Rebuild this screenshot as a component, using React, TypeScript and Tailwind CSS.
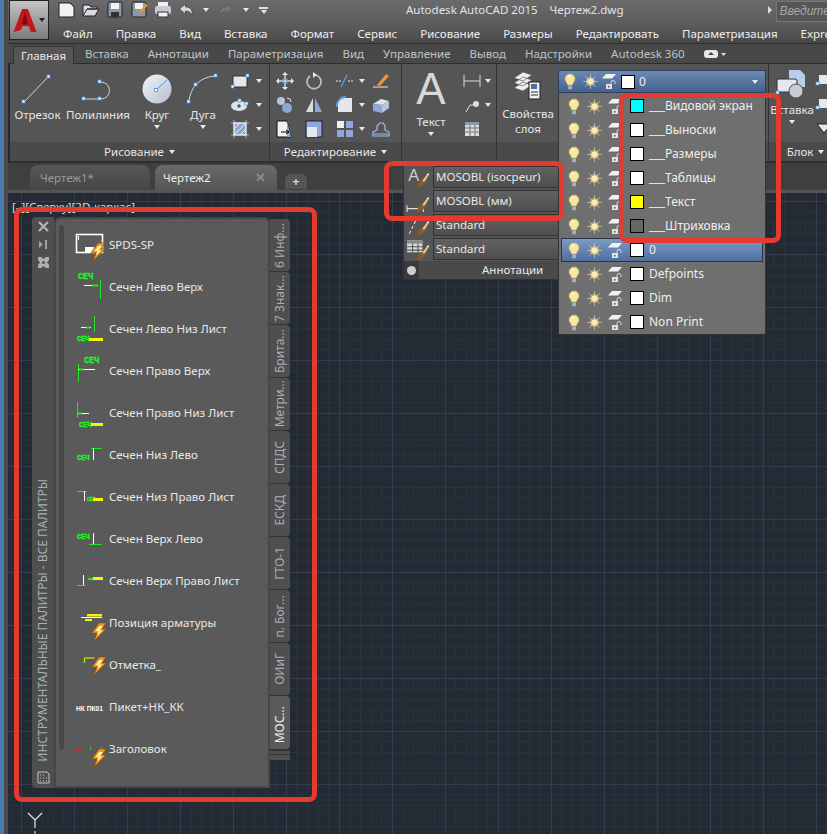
import React from 'react';

const Bolt = ({ x = 16, y = 16 }: { x?: number; y?: number }) => (
  <g transform={`translate(${x} ${y})`}>
    <path d="M8 0 L15 0 L11 6 L15 6 L3 18 L6 10 L1 10 Z" fill="#f59a1c" stroke="#9a4f0a" strokeWidth="0.8" />
    <path d="M8.500 3 L12 3 L8.500 7.500 L11.500 7.500 L6 12.500 L7.500 8 L4.500 8 Z" fill="#fff3b0" />
  </g>
);

const Seh = ({ x, y, size = 8.500 }: { x: number; y: number; size?: number }) => (
  <text x={x} y={y} fontSize={size} fontWeight="700" fill="#22f522" stroke="#22f522" strokeWidth=".3" fontFamily="'Liberation Mono', monospace">СЕЧ</text>
);

const G = '#22e822';

const paletteIcons: React.ReactNode[] = [
  <>
    <rect x="1.500" y="6.500" width="26" height="18" fill="none" stroke="#fff" strokeWidth="1.600" />
    <path d="M3.500 8v4" stroke="#fff" />
    <rect x="10" y="19" width="9" height="5" fill="#fff" />
    <Bolt x={15} y={15} />
  </>,
  <>
    <Seh x={3} y={9} />
    <path d="M9 15.500h14" stroke="#fff" /><path d="M17 15.500h6" stroke={G} strokeWidth="2" />
    <path d="M25.500 10v19" stroke={G} />
  </>,
  <>
    <path d="M19.500 4v16" stroke={G} /><path d="M6 15.500h10" stroke="#fff" /><path d="M11 15.500h4" stroke={G} strokeWidth="2" />
    <Seh x={2} y={29} size={7} />
    <rect x="14" y="26" width="14" height="3" fill="#f5f500" />
  </>,
  <>
    <Seh x={9} y={9} />
    <path d="M3.500 10v18" stroke={G} /><path d="M3 15.500h17" stroke="#fff" /><path d="M4 15.500h5" stroke={G} strokeWidth="2" />
  </>,
  <>
    <path d="M2.500 6v16" stroke={G} /><path d="M3 17.500h11" stroke="#fff" /><path d="M3 17.500h4" stroke={G} strokeWidth="2" />
    <Seh x={4} y={31} size={7} />
    <rect x="16" y="27" width="12" height="3" fill="#f5f500" />
  </>,
  <>
    <path d="M16 10.500h11" stroke={G} /><path d="M18.500 10v12" stroke="#fff" />
    <Seh x={2} y={22} size={7} />
  </>,
  <>
    <path d="M2 11.500h10" stroke={G} /><path d="M9.500 11v10" stroke="#fff" />
    <Seh x={12} y={21} size={4.500} /><rect x="18" y="18" width="10" height="3" fill="#f5f500" />
  </>,
  <>
    <Seh x={2} y={17} size={7} /><path d="M18.500 11v11" stroke="#fff" /><path d="M14 22.500h13" stroke={G} />
  </>,
  <>
    <path d="M8.500 11v10" stroke="#fff" /><path d="M2 21.500h9" stroke={G} />
    <Seh x={13} y={16} size={4} /><rect x="18" y="13" width="10" height="3" fill="#f5f500" />
  </>,
  <>
    <path d="M6 11.500h21" stroke="#fff" /><rect x="12" y="8" width="15" height="2.500" fill="#f5f500" /><rect x="10" y="13" width="7" height="2" fill="#f5f500" />
    <Bolt x={16} y={17} />
  </>,
  <>
    <path d="M9.500 14v-4h10" stroke="#f5f500" fill="none" /><rect x="8.500" y="13" width="2" height="2" fill={G} />
    <Bolt x={16} y={9} />
  </>,
  <text x="1" y="21" fontSize="7.500" fontWeight="700" fill="#fff" textLength="27" lengthAdjust="spacingAndGlyphs" fontFamily="'Liberation Sans', sans-serif">НК ПК01</text>,
  <>
    <path d="M1 18.500h5" stroke="#e02020" /><path d="M15.500 15v3" stroke={G} /><path d="M26 15v3" stroke={G} />
    <Bolt x={16} y={17} />
  </>,
];

const paletteLabels = [
  'SPDS-SP', 'Сечен Лево Верх', 'Сечен Лево Низ Лист', 'Сечен Право Верх', 'Сечен Право Низ Лист',
  'Сечен Низ Лево', 'Сечен Низ Право Лист', 'Сечен Верх Лево', 'Сечен Верх Право Лист',
  'Позиция арматуры', 'Отметка_', 'Пикет+НК_КК', 'Заголовок',
];

const paletteTabs = ['6 Инф...', '7 Знак...', 'Брита...', 'Метри...', 'СПДС', 'ЕСКД', 'ГТО-1', 'п. Бог...', 'ОИиГ'];

const Bulb = () => (
  <svg width="12" height="17" viewBox="0 0 12 17">
    <path d="M6 1a5 5 0 0 0-5 5c0 2.200 2 3 2.600 6h4.800c.6-3 2.600-3.800 2.600-6a5 5 0 0 0-5-5Z" fill="#f6e6a0" stroke="#c9b25c" strokeWidth=".6" />
    <path d="M3.500 3.500a3 3 0 0 1 2-1.200v3Z" fill="#fffbe6" />
    <path d="M4 12.500h4v3l-1 1h-2l-1-1Z" fill="#a8adb5" />
  </svg>
);

const Sun = () => (
  <svg width="15" height="15" viewBox="0 0 15 15">
    <path d="M7.500 0v15M0 7.500h15M2.200 2.200l10.600 10.600M12.800 2.200L2.200 12.800" stroke="#cfc8a8" strokeWidth=".7" />
    <circle cx="7.500" cy="7.500" r="4.600" fill="#efe3ae" fillOpacity=".5" />
    <circle cx="7.500" cy="7.500" r="3" fill="#fbeeb0" />
  </svg>
);

const LockIcon = () => (
  <svg width="17" height="17" viewBox="0 0 17 17">
    <path d="M5 1h10l-4 4.500H1Z" fill="#f2f2f2" />
    <rect x="5" y="11" width="6" height="5" fill="#e2e2e2" />
    <path d="M10 11V9.500a2 2 0 0 1 4 0V11" fill="none" stroke="#e8e8e8" strokeWidth=".9" />
    <rect x="7" y="13" width="1.500" height="1.500" fill="#555" />
  </svg>
);

const Caret = ({ className = '' }: { className?: string }) => (
  <span className={`inline-block w-0 h-0 border-x-[3.500px] border-x-transparent border-t-[4px] border-t-[#e8e8e8] ${className}`} />
);

const Grip = ({ x, y }: { x: number; y: number }) => (
  <rect x={x} y={y} width="3" height="3" fill="#fff" stroke="#4a90e2" strokeWidth=".8" />
);

const LineTool = () => (
  <svg width="34" height="34" viewBox="0 0 34 34">
    <path d="M3 30L27 5" stroke="#d6d6d6" /><Grip x={1} y={28} /><Grip x={26} y={3} />
  </svg>
);
const PolyTool = () => (
  <svg width="34" height="34" viewBox="0 0 34 34">
    <path d="M2 27h18M20 10a8.500 8.500 0 0 1 0 17" stroke="#d6d6d6" fill="none" /><Grip x={1} y={25} /><Grip x={17} y={25} /><Grip x={17} y={8} />
  </svg>
);
const CircleTool = () => (
  <svg width="32" height="32" viewBox="0 0 32 32">
    <defs>
      <linearGradient id="cg" x1="0" y1="0" x2="1" y2="1"><stop offset="0" stopColor="#f4f6fa" /><stop offset="1" stopColor="#b4bccb" /></linearGradient>
    </defs>
    <circle cx="16" cy="16" r="14.500" fill="url(#cg)" />
    <path d="M15 17L26 7" stroke="#4a90e2" /><Grip x={13.500} y={15.500} />
  </svg>
);
const ArcTool = () => (
  <svg width="34" height="34" viewBox="0 0 34 34">
    <path d="M3 30C4 15 14 5 29 4" stroke="#d6d6d6" fill="none" /><Grip x={1} y={28} /><Grip x={8} y={11} /><Grip x={28} y={2} />
  </svg>
);

const SmallIcon = ({ children }: { children: React.ReactNode }) => (
  <svg width="18" height="18" viewBox="0 0 18 18">{children}</svg>
);

const rectIcon = <SmallIcon><rect x="2" y="4" width="14" height="11" fill="#e4e7ee" stroke="#333" /><Grip x={0} y={13} /><Grip x={15} y={2} /></SmallIcon>;
const ellipseIcon = <SmallIcon><ellipse cx="8" cy="10" rx="8" ry="5" fill="#dfe3ea" /><path d="M8 8v4M6 10h4" stroke="#333" /><Grip x={7} y={3} /><Grip x={14} y={6} /></SmallIcon>;
const hatchIcon = <SmallIcon><rect x="3" y="3" width="12" height="12" fill="#8ea6d8" stroke="#fff" /><path d="M3 9l6-6M3 15L15 3M9 15l6-6" stroke="#e8eefc" /><path d="M0 3h18M0 15h18M3 0v18M15 0v18" stroke="#eee" strokeWidth=".6" /></SmallIcon>;

const editIcons: React.ReactNode[] = [
  <SmallIcon><path d="M9 1v16M1 9h16" stroke="#cfd6e0" strokeWidth="1.500" /><path d="M9 0l3 3H6ZM9 18l3-3H6ZM0 9l3-3v6ZM18 9l-3-3v6Z" fill="#e8e8e8" /><rect x="7" y="7" width="4" height="4" fill="none" stroke="#7ba7e0" /></SmallIcon>,
  <SmallIcon><path d="M5 4a7 7 0 1 0 6-1" fill="none" stroke="#b8bcc4" strokeWidth="1.800" /><path d="M8 0l4 3-4 3Z" fill="#e8e8e8" /></SmallIcon>,
  <SmallIcon><path d="M0 9h5M12 9h6" stroke="#e8e8e8" strokeDasharray="2 1" /><path d="M5 15l6-12" stroke="#5aa0ee" strokeWidth="1.200" /></SmallIcon>,
  <SmallIcon><path d="M1 15h15" stroke="#eee" /><path d="M5 13l9-11 3 2-9 10Z" fill="#e79a2e" /><path d="M3 15l2-3 3 2Z" fill="#c55" /></SmallIcon>,
  <SmallIcon><circle cx="5" cy="5" r="4" fill="#b8c4dc" /><circle cx="11" cy="12" r="5" fill="#8ea6d8" /><path d="M11 2a4 4 0 0 1 4 4" fill="none" stroke="#eee" /></SmallIcon>,
  <SmallIcon><path d="M8 2v14L1 16Z" fill="#d8dce4" /><path d="M10 2v14h7Z" fill="#8ea6d8" /></SmallIcon>,
  <SmallIcon><path d="M2 16V8a6 6 0 0 1 6-6h8v14Z" fill="#e4e7ee" /><path d="M1 11a9 9 0 0 1 9-10" fill="none" stroke="#5aa0ee" strokeWidth="1.800" /></SmallIcon>,
  <SmallIcon><path d="M1 8l8-5 8 2-7 4Z" fill="#dfe3ea" /><path d="M1 8v7l9 2V9Z" fill="#8ea6d8" /><path d="M10 9v8l7-5V5Z" fill="#b8c4dc" /></SmallIcon>,
  <SmallIcon><path d="M1 1h10l4 16H1Z" fill="#eef0f5" stroke="#111" /><path d="M11 1l4 16h-4Z" fill="#8ea6d8" /><path d="M5 12h8M10 10l3 2-3 2" stroke="#000" fill="none" /></SmallIcon>,
  <SmallIcon><rect x="1" y="1" width="16" height="16" fill="#8ea6d8" stroke="#223" /><rect x="2" y="7" width="10" height="10" fill="#e4e7ee" /></SmallIcon>,
  <SmallIcon><rect x="1" y="1" width="7" height="7" fill="#f0f0f0" /><rect x="10" y="1" width="7" height="7" fill="#8ea6d8" /><rect x="1" y="10" width="7" height="7" fill="#8ea6d8" /><rect x="10" y="10" width="7" height="7" fill="#8ea6d8" /></SmallIcon>,
  <SmallIcon><path d="M1 16v-4l4-2V6l3-3h3l2 3v4l4 2v4Z" fill="none" stroke="#9cc0f0" strokeWidth="1.200" /><path d="M2 14h14" stroke="#9cc0f0" /></SmallIcon>,
];

const Panel = ({ title, width, children }: { title: string; width: string; children?: React.ReactNode }) => (
  <div className={`${width} shrink-0 flex flex-col border-r border-[#333]`}>
    <div className="h-[80px] overflow-hidden">{children}</div>
    <div className="h-[19px] bg-[#4a4a4a] flex items-center justify-center gap-[5px] text-[#e6e6e6]">
      {title}{title !== '' && <Caret />}
    </div>
  </div>
);

const BigTool = ({ w, icon, label, caret }: { w: string; icon: React.ReactNode; label: string; caret?: boolean }) => (
  <div className={`${w} flex flex-col items-center pt-[7px] leading-[16px] text-[#e6e6e6]`}>
    <div className="h-[36px] flex items-center">{icon}</div>
    <span className="whitespace-nowrap">{label}</span>
    {caret && <Caret className="mt-[2px]" />}
  </div>
);

const layerRows = [
  { name: '___Видовой экран', color: 'bg-[#00ffff]' },
  { name: '___Выноски', color: 'bg-white' },
  { name: '___Размеры', color: 'bg-white' },
  { name: '___Таблицы', color: 'bg-white' },
  { name: '___Текст', color: 'bg-[#ffff00]' },
  { name: '___Штриховка', color: 'bg-[#666666]' },
  { name: '0', color: 'bg-white', active: true },
  { name: 'Defpoints', color: 'bg-white' },
  { name: 'Dim', color: 'bg-white' },
  { name: 'Non Print', color: 'bg-white' },
];

const brush = (
  <>
    <path d="M10 19l2-5 3-1 2 2-1 3-5 2Z" fill="#8a5a2e" />
    <path d="M15 13l4-5 1.500 1-4 6Z" fill="#e8c070" />
    <path d="M19 8l1.500-2 .5 2-1 1Z" fill="#fff" />
  </>
);
const annotationRows: { label: string; icon: React.ReactNode }[] = [
  { label: 'MOSOBL (isocpeur)', icon: <><text x="2" y="14" fontSize="15" fill="#cfcfcf" fontFamily="'Liberation Sans', sans-serif">A</text>{brush}</> },
  { label: 'MOSOBL (мм)', icon: <><path d="M1 17h15M1 14v6M16 14v6" stroke="#ddd" />{brush}</> },
  { label: 'Standard', icon: <><path d="M3 18L9 6" stroke="#ddd" strokeDasharray="3 2" />{brush}</> },
  { label: 'Standard', icon: <><rect x="1" y="2" width="14" height="11" fill="#d8dce4" /><rect x="1" y="2" width="14" height="3" fill="#888" /><path d="M1 8h14M1 11h14M6 5v8M11 5v8" stroke="#555" />{brush}</> },
];

const menu = ['Файл', 'Правка', 'Вид', 'Вставка', 'Формат', 'Сервис', 'Рисование', 'Размеры', 'Редактировать', 'Параметризация', 'Express'];
const ribbonTabs = ['Вставка', 'Аннотации', 'Параметризация', 'Вид', 'Управление', 'Вывод', 'Надстройки', 'Autodesk 360'];

const qat: React.ReactNode[] = [
  <path d="M1 2h11l4 4v10H1Z" fill="#f2f2f2" stroke="#222" />,
  <path d="M1 15V4h6l2 2h6v2H5L1 15h12l4-7H5" fill="#d8dce2" stroke="#222" />,
  <><rect x="2" y="1" width="14" height="15" rx="1" fill="#8d98a8" stroke="#222" /><rect x="5" y="2" width="8" height="6" fill="#f2f2f2" /><rect x="5" y="11" width="8" height="5" fill="#333" /></>,
  <><rect x="2" y="1" width="14" height="15" rx="1" fill="#8d98a8" stroke="#222" /><rect x="5" y="2" width="8" height="6" fill="#f2f2f2" /><path d="M9 11l7-8 2 1-7 8Z" fill="#e79a2e" /></>,
  <><rect x="4" y="1" width="10" height="5" fill="#f2f2f2" /><rect x="1" y="5" width="16" height="8" rx="2" fill="#c5cad2" /><rect x="4" y="11" width="10" height="5" fill="#f2f2f2" stroke="#333" /></>,
];

export default function App() {
  return (
    <div className="relative w-[827px] h-[834px] overflow-hidden flex bg-[#232a33] text-[11.500px] font-['Noto_Sans','Open_Sans',sans-serif]">
      <div className="w-[4px] bg-[#4a7aab]" />
      <div className="w-[4px] bg-[#4b4b4b]" />

      <div className="flex-1 flex flex-col min-w-0">
        {/* title bar */}
        <div className="h-[24px] pl-[50px] pb-[4px] flex items-center bg-[linear-gradient(#6a6a6a,#5c5c5c)] text-[#e4e4e4]">
          <div className="flex items-center gap-[6px] w-[348px] shrink-0">
            {qat.map((q, i) => (
              <svg key={i} width="18" height="18" viewBox="0 0 18 18">{q}</svg>
            ))}
            <svg width="16" height="14" viewBox="0 0 15 14"><path d="M1 6l6-5v3c4 0 7 2 7 8-2-3-4-4-7-4v3Z" fill="#d5d8dd" stroke="#333" strokeWidth=".6" /></svg>
            <Caret className="ml-[3px]" />
            <svg width="16" height="14" viewBox="0 0 15 14" className="ml-[3px]"><path d="M14 6L8 1v3C4 4 1 6 1 12c2-3 4-4 7-4v3Z" fill="#777" stroke="#555" strokeWidth=".6" /></svg>
            <Caret className="ml-[3px]" />
            <span className="ml-[4px] w-[9px] border-t-[2px] border-[#ddd] pt-[1px] flex justify-center"><Caret /></span>
          </div>
          <span className="whitespace-pre shrink-0">Autodesk AutoCAD 2015    Чертеж2.dwg</span>
          <span className="ml-[145px] mr-[4px] w-0 h-0 shrink-0 border-y-[4px] border-y-transparent border-l-[4px] border-l-[#ddd]" />
          <div className="w-[60px] h-[21px] mt-[3px] shrink-0 bg-[#565656] border border-[#777] pl-[2px] italic text-[#a8a8a8] text-[12px] leading-[19px] font-['Liberation_Sans',sans-serif]">Введите</div>
        </div>

        {/* menu */}
        <div className="h-[20px] pl-[55px] pt-[1px] flex items-center gap-[23px] bg-[linear-gradient(#5c5c5c,#484848)] border-b border-[#2d2d2d] text-[#eeeeee] whitespace-nowrap overflow-hidden">
          {menu.map(m => <span key={m}>{m}</span>)}
        </div>

        {/* ribbon tabs */}
        <div className="h-[20px] pl-[5px] flex items-end bg-[#484848] border-b border-[#2e2e2e] text-[#bfc4c8] whitespace-nowrap">
          <div className="h-[18px] w-[61px] mb-[-1px] flex items-center justify-center bg-[#555555] border border-b-0 border-[#333] text-[#e8e8e8]">Главная</div>
          <div className="flex items-center gap-[19px] h-[18px] ml-[11px]">
            {ribbonTabs.map(t => <span key={t}>{t}</span>)}
            <svg width="22" height="10" viewBox="0 0 22 10"><rect x="0" y="1" width="14" height="8" rx="3" fill="#e8e8e8" /><path d="M4 6l3-3 3 3Z" fill="#444" /><path d="M17 4h5l-2.500 3Z" fill="#ddd" /></svg>
          </div>
        </div>

        {/* ribbon panels */}
        <div className="h-[99px] ml-[2px] flex bg-[#555555] border-b-2 border-[#2e2e2e]">
          <Panel title="Рисование" width="w-[260px]">
            <div className="flex pl-[5px]">
              <BigTool w="w-[45px]" icon={<LineTool />} label="Отрезок" />
              <BigTool w="w-[76px]" icon={<PolyTool />} label="Полилиния" />
              <BigTool w="w-[42px]" icon={<CircleTool />} label="Круг" caret />
              <BigTool w="w-[50px]" icon={<ArcTool />} label="Дуга" caret />
              <div className="flex flex-col gap-[6px] pl-[3px] pt-[8px]">
                {[rectIcon, ellipseIcon, hatchIcon].map((ic, i) => (
                  <div key={i} className="flex items-center gap-[7px]">{ic}<Caret /></div>
                ))}
              </div>
            </div>
          </Panel>
          <Panel title="Редактирование" width="w-[132px]">
            <div className="grid grid-cols-[29px_31px_36px_18px] gap-y-[6px] pl-[6px] pt-[8px]">
              {editIcons.map((ic, i) => (
                <div key={i} className="flex items-center gap-[5px]">{ic}{i % 4 === 2 && <Caret />}</div>
              ))}
            </div>
          </Panel>
          <Panel title="" width="w-[95px]">
            <div className="flex pl-[10px]">
              <div className="flex flex-col items-center text-[#e6e6e6] leading-[16px] w-[38px]">
                <span className="text-[44px] leading-[50px] font-['Liberation_Sans',sans-serif] text-[#d8d8d8]">A</span>
                <span>Текст</span>
                <Caret className="mt-[2px]" />
              </div>
              <div className="flex flex-col gap-[6px] pl-[13px] pt-[8px]">
                <div className="flex items-center gap-[4px]"><SmallIcon><path d="M1 9h16M1 3v12M17 3v12" stroke="#ddd" /></SmallIcon><Caret /></div>
                <div className="flex items-center gap-[4px]"><SmallIcon><path d="M3 16l4-7h4" stroke="#ddd" fill="none" /><circle cx="13" cy="8" r="3" fill="#ddd" /></SmallIcon><Caret /></div>
                <SmallIcon><rect x="2" y="2" width="14" height="14" fill="#dadada" /><rect x="2" y="2" width="14" height="3" fill="#8d98a8" /><path d="M2 8h14M2 12h14M7 5v11M12 5v11" stroke="#777" /></SmallIcon>
              </div>
            </div>
          </Panel>
          <Panel title="" width="w-[272px]">
            <div className="flex flex-col items-center w-[62px] pt-[6px] leading-[15px] text-[#e6e6e6] text-center">
              <svg width="32" height="32" viewBox="0 0 32 32">
                <path d="M2 8l9-6 9 3-9 6ZM2 13l9-6 9 3-9 6ZM2 18l9-6 9 3-9 6Z" fill="#eee" stroke="#444" strokeWidth=".6" />
                <rect x="17" y="12" width="11" height="17" fill="#eee" stroke="#222" /><rect x="19" y="14" width="6" height="5" fill="#4a6fa5" /><path d="M19 22h7M19 25h7" stroke="#333" />
              </svg>
              <span className="mt-[4px]">Свойства<br />слоя</span>
            </div>
          </Panel>
          <Panel title="Блок" width="w-[74px]">
            <div className="flex">
              <div className="flex flex-col items-center w-[46px] pt-[4px] leading-[16px] text-[#e6e6e6]">
                <svg width="34" height="32" viewBox="0 0 34 32">
                  <path d="M14 2h11l5 5v12H14Z" fill="#b9cdea" /><rect x="2" y="11" width="20" height="13" rx="2" fill="#e4e7ee" stroke="#333" /><circle cx="21" cy="23" r="7" fill="#c8ccd4" stroke="#555" /><Grip x={1} y={23} />
                </svg>
                <span className="mt-[2px]">Вставка</span>
                <Caret className="mt-[2px]" />
              </div>
              <div className="flex flex-col gap-[6px] pt-[8px]">
                <SmallIcon><rect x="4" y="3" width="14" height="9" fill="#e4e7ee" /><Grip x={1} y={10} /></SmallIcon>
                <SmallIcon><rect x="4" y="3" width="14" height="9" fill="#e4e7ee" /><Grip x={1} y={10} /></SmallIcon>
                <SmallIcon><path d="M2 4h14l-7 9Z" fill="#e4e7ee" stroke="#222" /></SmallIcon>
              </div>
            </div>
          </Panel>
        </div>

        {/* document tabs */}
        <div className="h-[30px] pl-[22px] flex items-end gap-[5px] bg-[#3f3f3f] border-b-[3px] border-[#555555]">
          <div className="w-[120px] h-[25px] rounded-t-lg bg-[linear-gradient(#565656,#474747)] flex items-center pl-[10px] text-[#9a9a9a]">Чертеж1*</div>
          <div className="w-[122px] h-[25px] rounded-t-lg bg-[linear-gradient(#6a6a6a,#555555)] flex items-center justify-between pl-[8px] pr-[11px] text-[#eeeeee]">
            Чертеж2
            <span className="text-[#8c8c8c] text-[13px] leading-none font-bold">✕</span>
          </div>
          <div className="ml-[3px] w-[22px] h-[15px] mb-[1px] rounded-t-md bg-[#555555] flex items-center justify-center text-[#d8d8d8] text-[12px] leading-none font-bold">+</div>
        </div>

        {/* drawing area */}
        <div className="flex-1 relative bg-[#232a33] bg-[linear-gradient(#363c50_1px,transparent_1px),linear-gradient(90deg,#363c50_1px,transparent_1px),linear-gradient(#2a323d_1px,transparent_1px),linear-gradient(90deg,#2a323d_1px,transparent_1px)] bg-[size:53px_53px,53px_53px,10.600px_10.600px,10.600px_10.600px] bg-[position:13px_8px,13px_8px,2.400px_8px,2.400px_8px] text-[#d8d8d8]">
          <span className="absolute left-[4px] top-[5px] whitespace-nowrap">[–][Сверху][2D-каркас]</span>
          <svg className="absolute left-[18px] top-[618px]" width="20" height="24" viewBox="0 0 20 24">
            <path d="M2 2l7 7 7-7M9 9v8" stroke="#e8e8e8" strokeWidth="1.200" fill="none" />
            <path d="M9 20v4" stroke="#e8e8e8" />
          </svg>
        </div>
      </div>

      {/* app button */}
      <div className="absolute left-[9px] top-0 w-[40px] h-[40px] bg-[linear-gradient(#c4c4c4,#7c7c7c)] border border-[#222] flex items-center pl-[3px]">
        <svg width="24" height="25" viewBox="0 0 24 26">
          <path d="M9 1h6l9 24h-6l-2-6H9l-1 4-8 2Z" fill="#c4161c" />
          <path d="M12 4l3 13H9Z" fill="#7a0a0e" />
        </svg>
        <Caret className="ml-[2px] !border-t-[#222]" />
      </div>

      {/* annotation panel, dropped down */}
      <div className="absolute left-[403px] top-[163px] w-[157px] h-[117px] bg-[#555555] border border-[#333] flex flex-col text-[#e8e8e8]">
        <div className="flex-1 flex flex-col pt-[1px]">
          {annotationRows.map((r, i) => (
            <div key={i} className="h-[24px] flex items-center pl-[2px]">
              <svg width="24" height="22" viewBox="0 0 22 20" className="shrink-0">{r.icon}</svg>
              <div className="ml-[3px] w-[127px] h-[22px] pl-[2px] flex items-center bg-[linear-gradient(#626262,#4e4e4e)] border border-[#333]">{r.label}</div>
            </div>
          ))}
        </div>
        <div className="h-[19px] flex items-center bg-[#4a4a4a]">
          <div className="w-[15px] h-[18px] bg-[#3a3a3a] flex items-center justify-center">
            <div className="w-[9px] h-[9px] rounded-full bg-[#cfcfcf]" />
          </div>
          <span className="ml-[63px]">Аннотации</span>
        </div>
      </div>

      {/* layer dropdown */}
      <div className="absolute left-[558px] top-[70px] w-[208px] h-[23px] pl-[5px] pr-[7px] flex items-center bg-[linear-gradient(#6d89b4,#43618f)] border border-[#2c3f5e] text-[12px] text-[#eeeeee]">
        <Bulb />
        <span className="ml-[7px] flex"><Sun /></span>
        <span className="ml-[3px] flex"><LockIcon /></span>
        <span className="ml-[3px] w-[14px] h-[14px] bg-white border border-black" />
        <span className="ml-[4px]">0</span>
        <Caret className="ml-auto" />
      </div>
      <div className="absolute left-[558px] top-[93px] w-[208px] h-[242px] bg-[#6f6f6f] border border-[#333] border-t-0 pt-px text-[12px] text-[#eeeeee]">
        {layerRows.map(row => (
          <div key={row.name} className={`h-[24px] pl-[8px] flex items-center whitespace-nowrap border ${row.active ? 'mx-[2px] !pl-[6px] bg-[linear-gradient(#7d9ac4,#4f6f9f)] border-[#26344f]' : 'border-transparent mx-0'}`}>
            <Bulb />
            <span className="ml-[7px] flex"><Sun /></span>
            <span className="ml-[5px] flex"><LockIcon /></span>
            <span className={`ml-[6px] w-[14px] h-[14px] border border-black ${row.color}`} />
            <span className="ml-[5px]">{row.name}</span>
          </div>
        ))}
      </div>

      {/* tool palette window */}
      <div className="absolute left-[32px] top-[217px] w-[258px] h-[571px] flex text-[#e8e8e8]">
        <div className="w-[22px] bg-[#4f4f4f] flex flex-col items-center pt-[3px] pb-[4px] rounded-l-sm">
          <div className="flex flex-col gap-[5px]">
            <svg width="13" height="13" viewBox="0 0 13 13"><path d="M2 2l9 9M11 2l-9 9" stroke="#b4b4b4" strokeWidth="2.200" /></svg>
            <svg width="13" height="13" viewBox="0 0 13 13"><path d="M2 3v7l4-3.500ZM8 2h2v9H8Z" fill="#a0a0a0" /></svg>
            <svg width="13" height="13" viewBox="0 0 13 13"><path d="M1 1h3l2.500 2L9 1h3v3l-2 2.500L12 9v3H9l-2.500-2L4 12H1V9l2-2.500L1 4Z" fill="#b0b0b0" /><circle cx="6.500" cy="6.500" r="1.500" fill="#4f4f4f" /></svg>
          </div>
          <span className="mt-auto mb-[9px] [writing-mode:vertical-rl] rotate-180 whitespace-nowrap text-[12px] text-[#a4b2b8]">ИНСТРУМЕНТАЛЬНЫЕ ПАЛИТРЫ - ВСЕ ПАЛИТРЫ</span>
          <svg width="13" height="13" viewBox="0 0 13 13"><path d="M1 1h9l2 2v9H1Z" fill="none" stroke="#c4c4c4" /><path d="M3 4h1M6 4h1M3 7h1M6 7h1M9 7h1M3 10h1M6 10h1M9 10h1" stroke="#c4c4c4" /></svg>
        </div>
        <div className="w-[216px] bg-[#5a5a5a] border-2 border-[#474747] rounded-t-md flex pl-[3px] pt-[6px]">
          <div className="w-[5px] h-[525px] rounded-full bg-[#484848]" />
          <div className="ml-[11px] flex flex-col">
            {paletteLabels.map((label, i) => (
              <div key={label} className="h-[42px] flex items-center whitespace-nowrap">
                <svg width="32" height="36" viewBox="0 0 32 36" className="shrink-0">{paletteIcons[i]}</svg>
                <span className="ml-[2px] -translate-y-px">{label}</span>
              </div>
            ))}
          </div>
        </div>
        <div className="w-[20px] h-[543px] flex flex-col text-[12px]">
          <div className="h-[2px]" />
          {paletteTabs.map(t => (
            <div key={t} className="h-[53px] bg-[#4f4f4f] border-b border-[#333] rounded-r-sm flex items-center justify-center">
              <span className="[writing-mode:vertical-rl] rotate-180 whitespace-nowrap text-[#a6b0b6]">{t}</span>
            </div>
          ))}
          <div className="h-[53px] bg-[#5a5a5a] flex items-end justify-center rounded-r-sm pb-[6px]">
            <span className="[writing-mode:vertical-rl] rotate-180 whitespace-nowrap text-[#eeeeee]">МОС...</span>
          </div>
          <div className="h-[11px] bg-[#4f4f4f] border-t border-[#333] flex flex-col gap-[3px]">
            <div className="border-t border-[#333]" />
            <div className="border-t border-[#333]" />
          </div>
        </div>
      </div>

      {/* red callouts */}
      <div className="absolute left-[14px] top-[207px] w-[303px] h-[595px] border-[5px] border-[#e33b30] rounded-lg" />
      <div className="absolute left-[384px] top-[161px] w-[180px] h-[60px] border-[5px] border-[#e33b30] rounded-lg" />
      <div className="absolute left-[619px] top-[93px] w-[162px] h-[150px] border-[5px] border-[#e33b30] rounded-lg" />
    </div>
  );
}
